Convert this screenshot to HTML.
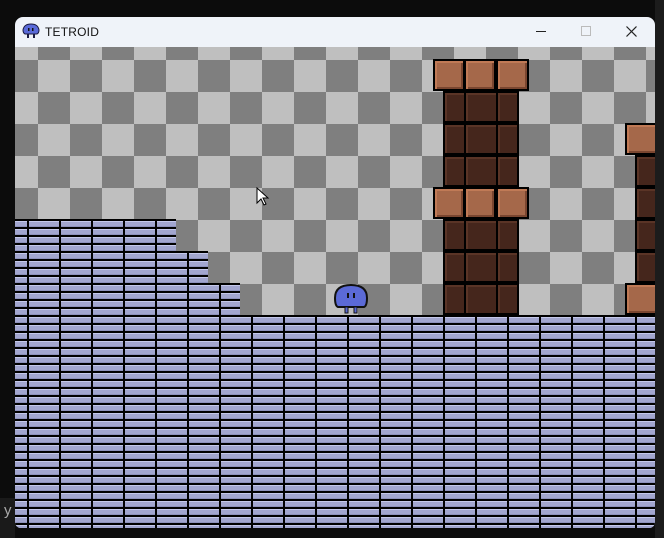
<!DOCTYPE html>
<html><head><style>
*{margin:0;padding:0;box-sizing:border-box}
body{width:664px;height:538px;background:#0c0c0c;position:relative;overflow:hidden;font-family:"Liberation Sans",sans-serif}
.rt{position:absolute;left:655px;top:0;width:9px;height:538px;background:#1c1c1c}
.bt{position:absolute;left:0;top:498px;width:15px;height:40px;background:#1a1a1a}
.win{position:absolute;left:15px;top:17px;width:640px;height:511px;border-radius:8px 8px 6px 6px;overflow:hidden;background:#eff3f9}
.title{position:absolute;left:0;top:0;width:640px;height:30px;font-size:12px;color:#111}
.game{position:absolute;left:0;top:30px;width:640px;height:481px;background:conic-gradient(#7f7f7f 25%,#bfbfbf 0 50%,#7f7f7f 0 75%,#bfbfbf 0);background-size:64px 64px;background-position:-9px -19px}
.brick{position:absolute;left:0;top:0;width:640px;height:481px;
background:
linear-gradient(90deg,#000 0 2px,transparent 2px) 12px 0/32px 8px,
linear-gradient(#000 0 2px,#c4c8ea 2px 3px,#a2a6cf 3px 7px,#8d91bb 7px 8px) 0 4px/32px 8px;
clip-path:polygon(0 172px,161px 172px,161px 204px,193px 204px,193px 236px,225px 236px,225px 268px,640px 268px,640px 481px,0 481px)}
.cap{position:absolute;width:32px;height:32px;background:#a5684a;border:2px solid #000;box-shadow:inset 2px 2px 0 #c07a56,inset -2px -2px 0 #7a4630}
.dk{position:absolute;height:32px;background:#45261c;border:2px solid #000;box-shadow:inset 2px 2px 0 #5a3426}
</style></head><body>
<div class="rt"></div><div class="bt"></div>
<div style="position:absolute;left:4px;top:502px;color:#aaa;font-size:15px">y</div>
<div class="win">
<div class="title">
<svg style="position:absolute;left:7px;top:6px" width="18" height="17" viewBox="0 0 18 17"><path d="M3 11 Q1 10 1 7 Q2 1 9 1 Q16 1 17 7 Q17 10 15 11 Z" fill="#5a6ad8" stroke="#1a1a40"/><rect x="6" y="5" width="1.5" height="3" fill="#111"/><rect x="10" y="5" width="1.5" height="3" fill="#111"/><rect x="5" y="11" width="2" height="4" fill="#1a1a40"/><rect x="11" y="11" width="2" height="4" fill="#1a1a40"/></svg>
<span style="position:absolute;left:30px;top:8px;letter-spacing:0.2px">TETROID</span>
<div style="position:absolute;left:521px;top:14px;width:10px;height:1px;background:#222"></div>
<div style="position:absolute;left:566px;top:9px;width:10px;height:10px;border:1px solid #bbb"></div>
<svg style="position:absolute;left:611px;top:9px" width="11" height="11"><path d="M0.5 0.5L10.5 10.5M10.5 0.5L0.5 10.5" stroke="#222" stroke-width="1.2"/></svg>
</div>
<div class="game">
<div class="brick"></div>
<div class="cap" style="left:418px;top:12px"></div><div class="cap" style="left:449px;top:12px"></div><div class="cap" style="left:481px;top:12px;width:33px"></div>
<div class="dk" style="left:428px;top:44px;width:23px"></div><div class="dk" style="left:449px;top:44px;width:34px"></div><div class="dk" style="left:481px;top:44px;width:23px"></div>
<div class="dk" style="left:428px;top:76px;width:23px"></div><div class="dk" style="left:449px;top:76px;width:34px"></div><div class="dk" style="left:481px;top:76px;width:23px"></div>
<div class="dk" style="left:428px;top:108px;width:23px"></div><div class="dk" style="left:449px;top:108px;width:34px"></div><div class="dk" style="left:481px;top:108px;width:23px"></div>
<div class="cap" style="left:418px;top:140px"></div><div class="cap" style="left:449px;top:140px"></div><div class="cap" style="left:481px;top:140px;width:33px"></div>
<div class="dk" style="left:428px;top:172px;width:23px"></div><div class="dk" style="left:449px;top:172px;width:34px"></div><div class="dk" style="left:481px;top:172px;width:23px"></div>
<div class="dk" style="left:428px;top:204px;width:23px"></div><div class="dk" style="left:449px;top:204px;width:34px"></div><div class="dk" style="left:481px;top:204px;width:23px"></div>
<div class="dk" style="left:428px;top:236px;width:23px"></div><div class="dk" style="left:449px;top:236px;width:34px"></div><div class="dk" style="left:481px;top:236px;width:23px"></div>
<div class="cap" style="left:610px;top:76px;width:34px"></div>
<div class="dk" style="left:620px;top:108px;width:24px"></div>
<div class="dk" style="left:620px;top:140px;width:24px"></div>
<div class="dk" style="left:620px;top:172px;width:24px"></div>
<div class="dk" style="left:620px;top:204px;width:24px"></div>
<div class="cap" style="left:610px;top:236px;width:34px"></div>
<svg style="position:absolute;left:319px;top:237px" width="34" height="32" viewBox="0 0 34 32">
<path d="M4 23 Q1 22 1 14 Q1 1 17 1 Q33 1 33 14 Q33 22 30 23 Z" fill="#5b6ad6" stroke="#111" stroke-width="2"/>
<rect x="13" y="9" width="2" height="5" fill="#111"/><rect x="19" y="9" width="2" height="5" fill="#111"/>
<rect x="11" y="23" width="3" height="6" fill="#5b6ad6" stroke="#111"/><rect x="20" y="23" width="3" height="6" fill="#5b6ad6" stroke="#111"/>
</svg>
<svg style="position:absolute;left:241px;top:140px" width="14" height="20" viewBox="0 0 14 20"><path d="M1 1 L1 16 L5 12 L8 18 L10 17 L7 11 L12 11 Z" fill="#fff" stroke="#000"/></svg>
</div>
</div>
</body></html>
